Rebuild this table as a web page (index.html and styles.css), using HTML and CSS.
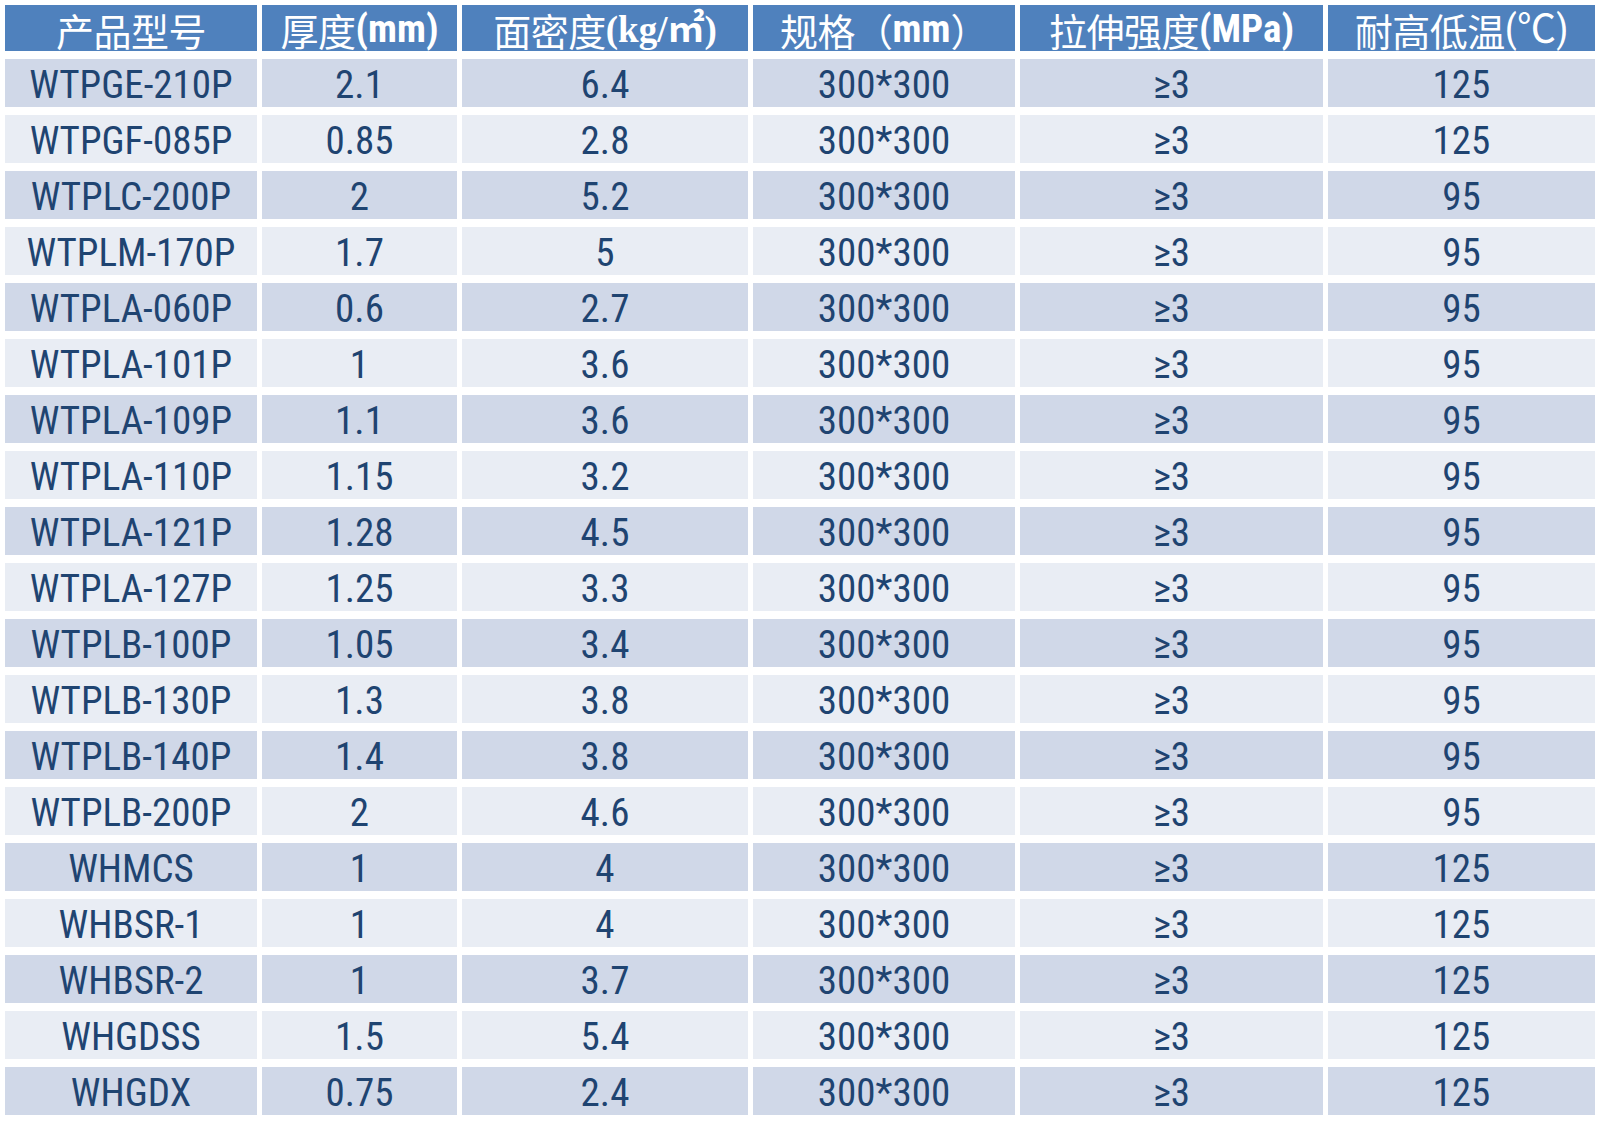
FILE: index.html
```html
<!DOCTYPE html>
<html lang="zh-CN">
<head>
<meta charset="utf-8">
<title>产品规格表</title>
<link rel="stylesheet" href="styles.css">
</head>
<body>
<div class="spec-table">
  <div class="hd">产品型号</div>
  <div class="hd">厚度<span class="lb">(mm)</span></div>
  <div class="hd">面密度<span class="sb">(kg/㎡)</span></div>
  <div class="hd">规格（<span class="lb">mm</span>）</div>
  <div class="hd">拉伸强度<span class="lb">(MPa)</span></div>
  <div class="hd">耐高低温<span class="lr">(℃)</span></div>

  <div class="c odd">WTPGE-210P</div><div class="c odd">2.1</div><div class="c odd">6.4</div><div class="c odd">300*300</div><div class="c odd">≥3</div><div class="c odd">125</div>
  <div class="c even">WTPGF-085P</div><div class="c even">0.85</div><div class="c even">2.8</div><div class="c even">300*300</div><div class="c even">≥3</div><div class="c even">125</div>
  <div class="c odd">WTPLC-200P</div><div class="c odd">2</div><div class="c odd">5.2</div><div class="c odd">300*300</div><div class="c odd">≥3</div><div class="c odd">95</div>
  <div class="c even">WTPLM-170P</div><div class="c even">1.7</div><div class="c even">5</div><div class="c even">300*300</div><div class="c even">≥3</div><div class="c even">95</div>
  <div class="c odd">WTPLA-060P</div><div class="c odd">0.6</div><div class="c odd">2.7</div><div class="c odd">300*300</div><div class="c odd">≥3</div><div class="c odd">95</div>
  <div class="c even">WTPLA-101P</div><div class="c even">1</div><div class="c even">3.6</div><div class="c even">300*300</div><div class="c even">≥3</div><div class="c even">95</div>
  <div class="c odd">WTPLA-109P</div><div class="c odd">1.1</div><div class="c odd">3.6</div><div class="c odd">300*300</div><div class="c odd">≥3</div><div class="c odd">95</div>
  <div class="c even">WTPLA-110P</div><div class="c even">1.15</div><div class="c even">3.2</div><div class="c even">300*300</div><div class="c even">≥3</div><div class="c even">95</div>
  <div class="c odd">WTPLA-121P</div><div class="c odd">1.28</div><div class="c odd">4.5</div><div class="c odd">300*300</div><div class="c odd">≥3</div><div class="c odd">95</div>
  <div class="c even">WTPLA-127P</div><div class="c even">1.25</div><div class="c even">3.3</div><div class="c even">300*300</div><div class="c even">≥3</div><div class="c even">95</div>
  <div class="c odd">WTPLB-100P</div><div class="c odd">1.05</div><div class="c odd">3.4</div><div class="c odd">300*300</div><div class="c odd">≥3</div><div class="c odd">95</div>
  <div class="c even">WTPLB-130P</div><div class="c even">1.3</div><div class="c even">3.8</div><div class="c even">300*300</div><div class="c even">≥3</div><div class="c even">95</div>
  <div class="c odd">WTPLB-140P</div><div class="c odd">1.4</div><div class="c odd">3.8</div><div class="c odd">300*300</div><div class="c odd">≥3</div><div class="c odd">95</div>
  <div class="c even">WTPLB-200P</div><div class="c even">2</div><div class="c even">4.6</div><div class="c even">300*300</div><div class="c even">≥3</div><div class="c even">95</div>
  <div class="c odd">WHMCS</div><div class="c odd">1</div><div class="c odd">4</div><div class="c odd">300*300</div><div class="c odd">≥3</div><div class="c odd">125</div>
  <div class="c even">WHBSR-1</div><div class="c even">1</div><div class="c even">4</div><div class="c even">300*300</div><div class="c even">≥3</div><div class="c even">125</div>
  <div class="c odd">WHBSR-2</div><div class="c odd">1</div><div class="c odd">3.7</div><div class="c odd">300*300</div><div class="c odd">≥3</div><div class="c odd">125</div>
  <div class="c even">WHGDSS</div><div class="c even">1.5</div><div class="c even">5.4</div><div class="c even">300*300</div><div class="c even">≥3</div><div class="c even">125</div>
  <div class="c odd">WHGDX</div><div class="c odd">0.75</div><div class="c odd">2.4</div><div class="c odd">300*300</div><div class="c odd">≥3</div><div class="c odd">125</div>
</div>
</body>
</html>
```
FILE: styles.css
```css
html, body {
  margin: 0;
  padding: 0;
  background: #ffffff;
}

body {
  padding: 5px 0 0 5px;
}

.spec-table {
  display: grid;
  grid-template-columns: 252px 195px 286px 262px 303px 267px;
  grid-template-rows: 46px repeat(19, 48px);
  column-gap: 5px;
  row-gap: 8px;
}

.hd {
  display: flex;
  align-items: center;
  justify-content: center;
  background: #4f81bd;
  color: #ffffff;
  font-family: "Noto Sans CJK SC", sans-serif;
  font-size: 38px;
  letter-spacing: -0.5px;
  line-height: 1;
  padding-top: 3px;
  box-sizing: border-box;
  white-space: nowrap;
}

.lb {
  font-family: "Roboto Condensed", "Noto Sans CJK SC", sans-serif;
  font-weight: 700;
  font-size: 39px;
  letter-spacing: 0;
}

.lr {
  font-family: "Roboto Condensed", "Noto Sans CJK SC", sans-serif;
  font-weight: 400;
  font-size: 39px;
  letter-spacing: 0;
}

.sb {
  font-family: "Liberation Serif", "Noto Sans CJK SC", serif;
  font-weight: 700;
  font-size: 37px;
  letter-spacing: 0;
}

.c {
  display: flex;
  align-items: center;
  justify-content: center;
  padding-top: 4px;
  box-sizing: border-box;
  font-family: "Roboto Condensed", "Liberation Sans", sans-serif;
  font-size: 39px;
  line-height: 1;
  color: #1f4471;
  white-space: nowrap;
}

.odd {
  background: #d0d8e8;
}

.even {
  background: #e9edf4;
}
```
